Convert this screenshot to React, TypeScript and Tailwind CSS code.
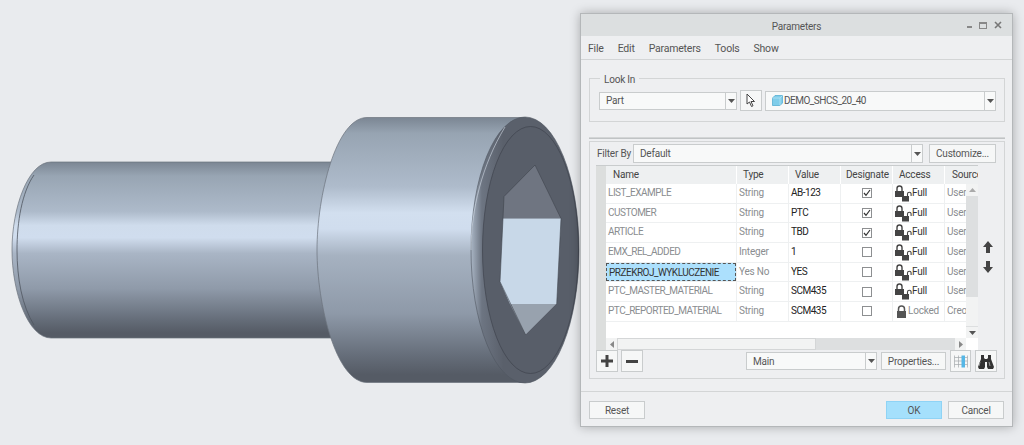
import React from 'react';

const font = { fontFamily: 'Roboto, "Noto Sans", sans-serif' };

const rows = [
    { name: 'LIST_EXAMPLE', type: 'String', value: 'AB-123', checked: true, access: 'Full', source: 'User' },
    { name: 'CUSTOMER', type: 'String', value: 'PTC', checked: true, access: 'Full', source: 'User' },
    { name: 'ARTICLE', type: 'String', value: 'TBD', checked: true, access: 'Full', source: 'User' },
    { name: 'EMX_REL_ADDED', type: 'Integer', value: '1', checked: false, access: 'Full', source: 'User' },
    { name: 'PRZEKROJ_WYKLUCZENIE', type: 'Yes No', value: 'YES', checked: false, access: 'Full', source: 'User', selected: true },
    { name: 'PTC_MASTER_MATERIAL', type: 'String', value: 'SCM435', checked: false, access: 'Full', source: 'User' },
    { name: 'PTC_REPORTED_MATERIAL', type: 'String', value: 'SCM435', checked: false, access: 'Locked', source: 'Creo' },
];

const Bolt = () => (
    <svg width="580" height="445" viewBox="0 0 580 445" className="block shrink-0">
        <defs>
            <linearGradient id="shank" x1="0" y1="0" x2="0" y2="1">
                <stop offset="0" stopColor="#7b8693" />
                <stop offset="0.08" stopColor="#98a5b3" />
                <stop offset="0.28" stopColor="#adbaca" />
                <stop offset="0.36" stopColor="#cfdcec" />
                <stop offset="0.43" stopColor="#d0ddee" />
                <stop offset="0.52" stopColor="#a9b5c5" />
                <stop offset="0.72" stopColor="#8f9aa9" />
                <stop offset="0.9" stopColor="#646c78" />
                <stop offset="0.97" stopColor="#555b65" />
                <stop offset="1" stopColor="#555b65" />
            </linearGradient>
            <linearGradient id="head" x1="0" y1="0" x2="0" y2="1">
                <stop offset="0" stopColor="#7b8693" />
                <stop offset="0.06" stopColor="#97a4b2" />
                <stop offset="0.26" stopColor="#aebbcb" />
                <stop offset="0.36" stopColor="#d2dfef" />
                <stop offset="0.42" stopColor="#d0ddee" />
                <stop offset="0.52" stopColor="#a6b2c1" />
                <stop offset="0.74" stopColor="#8e99a8" />
                <stop offset="0.9" stopColor="#656d79" />
                <stop offset="0.97" stopColor="#555b65" />
                <stop offset="1" stopColor="#555b65" />
            </linearGradient>
            <linearGradient id="rim" x1="0" y1="0" x2="1" y2="0">
                <stop offset="0" stopColor="#a9b5c4" />
                <stop offset="0.1" stopColor="#6d7582" />
                <stop offset="0.3" stopColor="#5a606b" />
                <stop offset="1" stopColor="#5a606b" />
            </linearGradient>
        </defs>

        {/* shank */}
        <path d="M51 162 H340 V338 H51 C28 338 12 292 12 250 C12 208 28 162 51 162 Z" fill="url(#shank)" stroke="#6b727d" strokeWidth="0.7" />
        <path d="M34 175 C22 192 17 222 17 250 C17 278 22 306 34 325" fill="none" stroke="#4f5560" strokeWidth="0.8" />

        {/* head */}
        <path d="M367 117.5 H524 V382.5 H367 C336 382.5 317 304 317 250 C317 196 336 117.5 367 117.5 Z" fill="url(#head)" stroke="#6b727d" strokeWidth="0.7" />
        <ellipse cx="525" cy="250" rx="54" ry="133" fill="url(#rim)" stroke="#4f5560" strokeWidth="0.6" />
        <path d="M505 127 C482 165 471 210 471 250" fill="none" stroke="#dbe4ee" strokeWidth="0.8" opacity="0.7" />
        <ellipse cx="530.5" cy="250" rx="48" ry="123.5" fill="#585e69" stroke="#3f444d" strokeWidth="0.7" />

        {/* hex socket */}
        <polygon points="535,165 561,218.5 503,218.5 504,196.5" fill="#6f7581" />
        <polygon points="503,218.5 561,218.5 556.7,304 510,304 500,281.7" fill="#c8d8e8" />
        <polygon points="510,304 556.7,304 525.7,335" fill="#98a2ae" />
        <polygon points="535,165 561,218.5 556.7,304 525.7,335 500,281.7 504,196.5" fill="none" stroke="#3f444d" strokeWidth="0.6" />
    </svg>
);

const Caret = () => (
    <svg width="7" height="4" viewBox="0 0 7 4"><path d="M0 0h7L3.5 4z" fill="#555" /></svg>
);

const Select = ({ className, children }: { className: string; children: React.ReactNode }) => (
    <div className={`flex items-stretch border border-[#c9cccd] bg-[#f8f9f9] ${className}`}>
        <div className="flex flex-1 items-center overflow-hidden pl-[6px] text-[#555]">{children}</div>
        <div className="flex w-[11px] items-center justify-center border-l border-[#c9cccd]"><Caret /></div>
    </div>
);

const Button = ({ className, children }: { className: string; children: React.ReactNode }) => (
    <div className={`flex items-center justify-center border border-[#c9cccd] bg-[#f6f7f7] text-[#555] ${className}`}>{children}</div>
);

const DoubleLock = () => (
    <svg width="19" height="18" viewBox="0 0 19 18" className="shrink-0">
        <path d="M4 7V4.500a2.500 2.500 0 0 1 5 0V7" fill="none" stroke="#444" strokeWidth="1.4" />
        <rect x="2" y="7" width="9" height="6" fill="#444" />
        <rect x="9" y="12" width="7" height="5.500" fill="#444" />
        <path d="M14.500 12V10a1.800 1.800 0 0 1 3.600 0v2" fill="none" stroke="#444" strokeWidth="1.100" />
    </svg>
);

const Lock = () => (
    <svg width="11" height="13" viewBox="0 0 11 13" className="shrink-0">
        <path d="M2.500 6V4a3 3 0 0 1 6 0v2" fill="none" stroke="#555" strokeWidth="1.500" />
        <rect x="1" y="6" width="9" height="7" fill="#555" />
    </svg>
);

const Checkbox = ({ checked }: { checked: boolean }) => (
    <div className="flex h-[10px] w-[10px] items-center justify-center border border-[#8d8f91] bg-white">
        {checked && (
            <svg width="8" height="8" viewBox="0 0 8 8"><path d="M1 4l2 2.400L7 1" fill="none" stroke="#333" strokeWidth="1.200" /></svg>
        )}
    </div>
);

const Table = () => (
    <div className="h-[185px] w-[382px] border-t border-[#c9cccd] bg-white">
        <div className="flex h-[18px] bg-[#eef0f1] text-[#444]">
            <div className="w-[10px] bg-[#dcdedd]" />
            <div className="w-[130px] pl-[7px] leading-[17px]">Name</div>
            <div className="w-[52px] border-l border-white pl-[6px] leading-[17px]">Type</div>
            <div className="w-[52px] border-l border-white pl-[6px] leading-[17px]">Value</div>
            <div className="w-[52px] border-l border-white pl-[5px] leading-[17px]">Designate</div>
            <div className="w-[52px] border-l border-white pl-[6px] leading-[17px]">Access</div>
            <div className="flex-1 overflow-hidden border-l border-white pl-[7px] leading-[17px]">Source</div>
        </div>
        <div className="flex h-[154px]">
            <div className="w-[10px] bg-[#dcdedd]" />
            <div className="w-[360px]">
                {rows.map(row => (
                    <div key={row.name} className="flex h-[19.7px] border-b border-[#eef0f1] leading-[18.7px]">
                        <div className={`w-[130px] overflow-hidden whitespace-nowrap pl-[2px] tracking-[-0.5px] ${row.selected ? 'border border-dashed border-[#555] bg-[#ace0fd] leading-[17px] text-[#333]' : 'text-[#8a8d90]'}`}>{row.name}</div>
                        <div className="w-[52px] border-l border-[#eef0f1] pl-[2px] text-[#8a8d90]">{row.type}</div>
                        <div className="w-[52px] border-l border-[#eef0f1] pl-[2px] tracking-[-0.5px] text-[#222]">{row.value}</div>
                        <div className="flex w-[52px] items-center justify-center border-l border-[#eef0f1]"><Checkbox checked={row.checked} /></div>
                        {row.access === 'Locked' ? (
                            <div className="flex w-[52px] items-center border-l border-[#eef0f1] pl-[3px] text-[#8a8d90]"><Lock /><span className="ml-[1px]">Locked</span></div>
                        ) : (
                            <div className="flex w-[52px] items-start border-l border-[#eef0f1] text-[#333]"><DoubleLock /><span>{row.access}</span></div>
                        )}
                        <div className="flex-1 overflow-hidden border-l border-[#eef0f1] pl-[2px] text-[#8a8d90]">{row.source}</div>
                    </div>
                ))}
            </div>
            <div className="flex w-[12px] flex-col bg-[#f2f3f3]">
                <div className="flex h-[12px] items-center justify-center"><svg width="7" height="4" viewBox="0 0 7 4"><path d="M0 4h7L3.500 0z" fill="#aaa" /></svg></div>
                <div className="h-[101px] bg-[#dddfe0]" />
                <div className="flex-1" />
                <div className="flex h-[12px] items-center justify-center border-t border-[#dddfe0]"><Caret /></div>
            </div>
        </div>
        <div className="flex h-[12px]">
            <div className="w-[10px] bg-[#dcdedd]" />
            <div className="flex w-[360px] items-center bg-[#dddfe0]">
                <div className="flex h-full w-[11px] items-center justify-center bg-[#f2f3f3]"><svg width="4" height="7" viewBox="0 0 4 7"><path d="M4 0v7L0 3.500z" fill="#888" /></svg></div>
                <div className="h-full w-[199px] border border-[#d4d6d7] bg-[#f2f3f3]" />
                <div className="flex-1" />
                <div className="flex h-full w-[11px] items-center justify-center bg-[#f2f3f3]"><svg width="4" height="7" viewBox="0 0 4 7"><path d="M0 0v7l4-3.500z" fill="#888" /></svg></div>
            </div>
        </div>
    </div>
);

const App: React.FC = () => {
    return (
        <div className="flex h-[445px] w-[1024px] overflow-hidden bg-[#e9ebee] text-[10px] tracking-[-0.2px]" style={font}>
            <Bolt />
            <div className="mt-[13px] flex h-[414px] w-[433px] flex-col border border-[#b4b7b9] bg-[#eeeff1] shadow-[0_0_10px_rgba(0,0,0,0.28)]">
                {/* title */}
                <div className="relative flex h-[22px] shrink-0 items-center justify-center bg-[#dcdfe0] pt-[2px] text-[#555]">
                    Parameters
                    <div className="absolute right-[10px] top-[7px] flex items-center gap-[7px]">
                        <div className="mt-[4px] h-[2px] w-[5px] bg-[#888]" />
                        <div className="h-[7px] w-[8px] border border-t-2 border-[#888]" />
                        <svg width="8" height="8" viewBox="0 0 8 8"><path d="M1 1l6 6M7 1L1 7" stroke="#777" strokeWidth="1.600" /></svg>
                    </div>
                </div>

                {/* menu */}
                <div className="flex h-[24px] shrink-0 items-center gap-[14px] border-b border-[#d3d5d6] pl-[7px] pt-[2px] text-[10.5px] text-[#555]">
                    <span>File</span><span>Edit</span><span>Parameters</span><span>Tools</span><span>Show</span>
                </div>

                {/* look in */}
                <div className="relative ml-[8px] mt-[18px] h-[44px] w-[416px] shrink-0 border border-[#d3d5d6] pl-[9px] pt-[11px]">
                    <span className="absolute -top-[7px] left-[10px] bg-[#eeeff1] px-[4px] text-[#555]">Look In</span>
                    <div className="flex items-center">
                        <Select className="h-[18px] w-[138px]">Part</Select>
                        <Button className="ml-[3px] h-[21px] w-[22px]">
                            <svg width="10" height="15" viewBox="0 0 10 15"><path d="M1 1v10l2.500-2 2 4.500 1.500-.7-2-4.300h3.500z" fill="#fff" stroke="#444" strokeWidth="1" /></svg>
                        </Button>
                        <Select className="ml-[3px] h-[20px] w-[231px]">
                            <svg width="11" height="11" viewBox="0 0 11 11" className="shrink-0"><path d="M0.500 3L3 .5h7.500V8L8 10.500H.5z" fill="#7fcdea" stroke="#4aa8cf" strokeWidth=".7" /><path d="M8 10.500V3L10.500 .5M8 3H.5" fill="none" stroke="#bde6f5" strokeWidth=".7" /></svg>
                            <span className="ml-[1px] tracking-[-0.5px]">DEMO_SHCS_20_40</span>
                        </Select>
                    </div>
                </div>

                {/* double separator */}
                <div className="ml-[8px] mt-[15px] h-[2px] w-[416px] shrink-0 border-y border-[#d3d5d6] border-b-[#c0c3c5]" />

                {/* parameters group */}
                <div className="ml-[8px] mt-[2px] h-[238px] w-[416px] shrink-0 border border-[#d3d5d6] pt-[2px]">
                    <div className="flex items-center pl-[7px]">
                        <span className="w-[36px] whitespace-nowrap text-[#555]">Filter By</span>
                        <Select className="h-[19px] w-[290px]">Default</Select>
                        <Button className="ml-[6px] h-[19px] w-[67px]">Customize...</Button>
                    </div>
                    <div className="mt-[2px] flex pl-[6px]">
                        <Table />
                        <div className="mb-[76px] ml-[3px] flex flex-col justify-end gap-[6px] pl-[1px]">
                            <svg width="12" height="14" viewBox="0 0 12 14"><path d="M6 1l5 6H8v6H4V7H1z" fill="#444" /></svg>
                            <svg width="12" height="14" viewBox="0 0 12 14"><path d="M6 13l5-6H8V1H4v6H1z" fill="#444" /></svg>
                        </div>
                    </div>
                    <div className="flex items-center pl-[6px]">
                        <Button className="h-[22px] w-[22px]">
                            <svg width="12" height="12" viewBox="0 0 12 12"><path d="M4.500 0h3v4.500H12v3H7.500V12h-3V7.500H0v-3h4.500z" fill="#444" /></svg>
                        </Button>
                        <Button className="ml-[3px] h-[22px] w-[22px]">
                            <svg width="12" height="3" viewBox="0 0 12 3"><rect width="12" height="3" fill="#444" /></svg>
                        </Button>
                        <Select className="ml-[103px] h-[18px] w-[131px]">Main</Select>
                        <Button className="ml-[4px] h-[18px] w-[65px]">Properties...</Button>
                        <Button className="ml-[4px] h-[22px] w-[21px]">
                            <svg width="14" height="13" viewBox="0 0 14 13">
                                <path d="M.5 2.500h13M.5 6h13M.5 9.500h13M.5.5v12M4.500.5v12M13.500.5v12" stroke="#a4a7aa" strokeWidth=".7" fill="none" />
                                <rect x="7.500" y=".5" width="3.500" height="12" fill="#56b7e6" />
                            </svg>
                        </Button>
                        <Button className="ml-[4px] h-[22px] w-[22px]">
                            <svg width="16" height="15" viewBox="0 0 16 15">
                                <path d="M3 1h3v3l1 1h2l1-1V1h3v4l3 8-1 2H10l-1-2V8H7v5l-1 2H1l-1-2 3-8z" fill="#333" />
                                <path d="M2 8L1 12M11 8l1 4" stroke="#999" strokeWidth="1" />
                            </svg>
                        </Button>
                    </div>
                </div>

                {/* footer */}
                <div className="mt-[12px] flex h-[36px] shrink-0 items-end justify-between border-t border-[#d3d5d6] px-[8px] pb-[8px]">
                    <Button className="h-[18px] w-[56px]">Reset</Button>
                    <div className="flex gap-[6px]">
                        <Button className="h-[18px] w-[56px] !border-[#8fd3f5] !bg-[#a5e0fc]">OK</Button>
                        <Button className="h-[18px] w-[56px]">Cancel</Button>
                    </div>
                </div>
            </div>
        </div>
    );
};

export default App;
